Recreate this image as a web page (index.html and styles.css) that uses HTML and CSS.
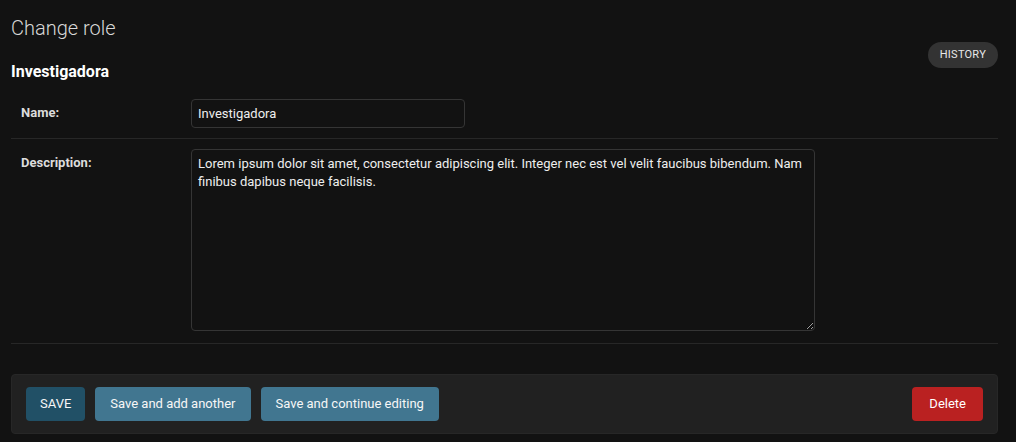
FILE: index.html
```html
<!DOCTYPE html>
<html lang="en">
<head>
<meta charset="utf-8">
<title>Change role</title>
<link rel="stylesheet" href="styles.css">
</head>
<body>
<main class="content">
  <h1 class="page-title">Change role</h1>
  <div class="object-head">
    <h2 class="object-name">Investigadora</h2>
    <a class="history-link" href="#">History</a>
  </div>
  <form class="change-form">
    <fieldset class="module">
      <div class="form-row">
        <label class="field-label" for="id_name">Name:</label>
        <input class="text-input" id="id_name" type="text" value="Investigadora">
      </div>
      <div class="form-row form-row-tall">
        <label class="field-label" for="id_description">Description:</label>
        <textarea class="text-area" id="id_description">Lorem ipsum dolor sit amet, consectetur adipiscing elit. Integer nec est vel velit faucibus bibendum. Nam finibus dapibus neque facilisis.</textarea>
      </div>
    </fieldset>
    <div class="submit-row">
      <button type="button" class="btn btn-default">SAVE</button>
      <button type="button" class="btn">Save and add another</button>
      <button type="button" class="btn">Save and continue editing</button>
      <a class="btn btn-delete" href="#">Delete</a>
    </div>
  </form>
</main>
</body>
</html>
```

FILE: styles.css
```css
* { box-sizing: border-box; }

html, body {
  margin: 0;
  padding: 0;
  background: #121212;
  color: #eeeeee;
  font-family: Roboto, "Open Sans", "Liberation Sans", sans-serif;
  font-size: 14px;
}

.content {
  padding: 14px 18px 0 11px;
}

.page-title {
  margin: 0;
  font-size: 20px;
  line-height: 28px;
  font-weight: 300;
  color: #d8d8d8;
}

.object-head {
  display: flex;
  justify-content: space-between;
  align-items: flex-start;
}

.object-name {
  margin: 19px 0 0;
  font-size: 16px;
  line-height: 22px;
  font-weight: 700;
  color: #ffffff;
}

.history-link {
  display: block;
  height: 26px;
  padding: 3px 12px;
  line-height: 20px;
  font-size: 11px;
  letter-spacing: 0.25px;
  text-transform: uppercase;
  text-decoration: none;
  color: #e8e8e8;
  background: #333333;
  border-radius: 15px;
}

.change-form { margin: 6px 0 0; }

.module {
  margin: 0;
  padding: 0;
  border: 0;
}

.form-row {
  display: flex;
  align-items: flex-start;
  padding: 10px;
  border-bottom: 1px solid #272727;
}

.form-row-tall { padding-bottom: 12px; }

.field-label {
  width: 170px;
  flex: none;
  padding: 6px 10px 0 0;
  font-size: 13px;
  line-height: 16px;
  font-weight: 700;
  color: #dcdcdc;
}

.text-input,
.text-area {
  margin: 0;
  font-family: inherit;
  font-size: 13px;
  color: #eeeeee;
  background: #121212;
  border: 1px solid #353535;
  border-radius: 4px;
  padding: 5px 6px;
}

.text-input {
  width: 274px;
  height: 29px;
  line-height: 17px;
}

.text-area {
  display: block;
  width: 624px;
  height: 182px;
  line-height: 18px;
  resize: both;
}

.submit-row {
  display: flex;
  gap: 10px;
  margin-top: 30px;
  padding: 12px 14px;
  background: #212121;
  border: 1px solid #272727;
  border-radius: 4px;
}

.btn {
  display: block;
  height: 34px;
  margin: 0;
  padding: 0 15px;
  border: 0;
  border-radius: 4px;
  font-family: inherit;
  font-size: 13px;
  line-height: 34px;
  color: #f7f7f7;
  background: #417690;
  text-decoration: none;
  cursor: pointer;
}

.btn-default {
  padding: 0 14px;
  background: #215066;
}

.btn-delete {
  margin-left: auto;
  padding: 0 17px;
  background: #ba2121;
  color: #ffffff;
}
```
